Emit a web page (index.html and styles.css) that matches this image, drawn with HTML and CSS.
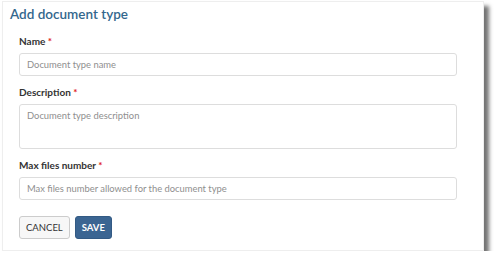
FILE: index.html
```html
<!DOCTYPE html>
<html lang="en">
<head>
    <meta charset="UTF-8">
    <meta name="viewport" content="width=device-width, initial-scale=1.0">
    <title>Add document type</title>
    <link rel="stylesheet" href="styles.css">
</head>
<body>
    <div class="card">
        <h2 class="title">Add document type</h2>
        <form class="form" id="docTypeForm">
            <label for="name">Name <span class="req">*</span></label>
            <input type="text" id="name" placeholder="Document type name">

            <label for="description">Description <span class="req">*</span></label>
            <textarea id="description" placeholder="Document type description"></textarea>

            <label for="maxFiles">Max files number <span class="req">*</span></label>
            <input type="text" id="maxFiles" placeholder="Max files number allowed for the document type">

            <div class="actions">
                <button type="button" class="btn btn-cancel">CANCEL</button>
                <button type="submit" class="btn btn-save">SAVE</button>
            </div>
        </form>
    </div>
</body>
</html>
```

FILE: styles.css
```css
body {
    font-family: Lato, "Open Sans", Arial, sans-serif;
    margin: 0;
    background-color: #ffffff;
}
.card {
    width: 482px;
    height: 250px;
    margin: 1px 0 0 2px;
    box-sizing: border-box;
    background: white;
    border: 1px solid #eeeeee;
    box-shadow: 5px 5px 4px rgba(0, 0, 0, 0.55);
}
.title {
    margin: 0;
    padding: 2px 0 0 7px;
    font-size: 13.5px;
    line-height: 20px;
    font-weight: 600;
    color: #33678d;
}
.form {
    padding: 11px 26px 0 16px;
}
label {
    display: block;
    margin-bottom: 5px;
    font-size: 10px;
    line-height: 13px;
    font-weight: bold;
    color: #333333;
}
.req {
    color: #e02020;
}
input, textarea {
    display: block;
    width: 100%;
    box-sizing: border-box;
    height: 23px;
    padding: 0 7px;
    margin-bottom: 10px;
    border: 1px solid #dddddd;
    border-radius: 3px;
    font-family: inherit;
    font-size: 9.4px;
    color: #555555;
}
textarea {
    height: 45px;
    padding-top: 5px;
    resize: none;
}
::placeholder {
    color: #8f8f8f;
}
.actions {
    display: flex;
    gap: 5px;
    margin-top: 16px;
}
.btn {
    height: 23px;
    padding: 0 6px;
    border-radius: 3px;
    font-family: inherit;
    font-size: 9.5px;
    cursor: pointer;
}
.btn-cancel {
    background-color: #f7f7f7;
    border: 1px solid #cccccc;
    color: #333333;
}
.btn-save {
    padding: 0 6px;
    background-color: #3b6592;
    border: 1px solid #335a84;
    color: white;
    font-weight: bold;
}
```
